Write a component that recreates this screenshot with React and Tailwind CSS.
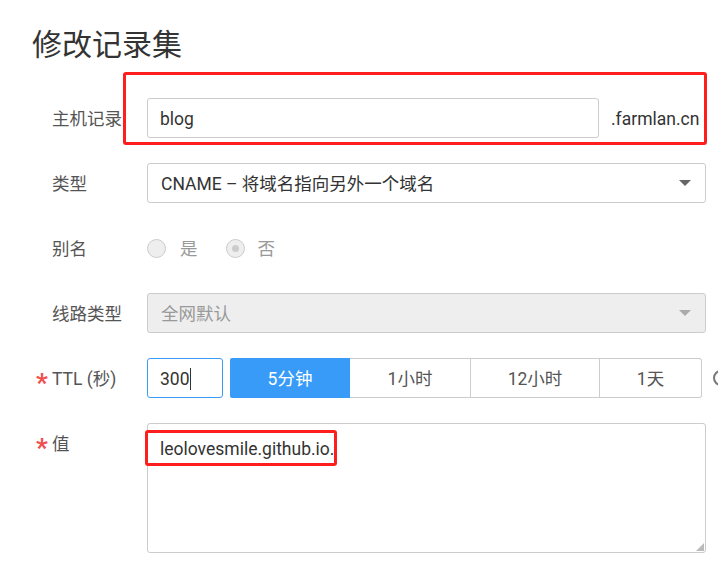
import React from "react";

function Caret({ color }) {
  return (
    <svg width="12" height="7" viewBox="0 0 12 7" className="shrink-0">
      <path d="M0 0 L12 0 L6 6 Z" fill={color} />
    </svg>
  );
}

function Label({ children, required }) {
  return (
    <div className="w-[110px] h-10 shrink-0 flex items-center text-[17.5px] text-[#555] pt-[2px]">
      <span className="w-[15px] text-[#f0504f] text-[26px] font-bold leading-none pt-[8px] -ml-[1px] mr-[1px]">{required ? "*" : ""}</span>
      <span>{children}</span>
    </div>
  );
}

export default function App() {
  return (
    <div className="relative w-[718px] h-[565px] overflow-hidden bg-white font-['Roboto','Noto_Sans_CJK_SC',sans-serif]">
      <h1 className="pl-[32px] pt-[25px] text-[30px] leading-[40px] text-[#333] font-normal">修改记录集</h1>

      <div className="mt-[33px] pl-[37px] pr-[12px] flex flex-col gap-[25px]">
        {/* 主机记录 */}
        <div className="flex items-center h-10">
          <Label>主机记录</Label>
          <div className="w-[452px] shrink-0 h-10 border border-[#ccc] rounded-[3px] flex items-center px-[12px] pt-[2px] text-[17.5px] text-[#333]">
            blog
          </div>
          <span className="ml-[12px] pt-[2px] text-[17.5px] text-[#333] whitespace-nowrap">.farmlan.cn</span>
        </div>

        {/* 类型 */}
        <div className="flex items-center h-10">
          <Label>类型</Label>
          <div className="flex-1 h-10 border border-[#ccc] rounded-[3px] flex items-center justify-between pl-[13px] pr-[14px] text-[17.5px] text-[#333]">
            <span className="pt-[2px]">CNAME – 将域名指向另外一个域名</span>
            <Caret color="#666" />
          </div>
        </div>

        {/* 别名 */}
        <div className="flex items-center h-10">
          <Label>别名</Label>
          <div className="flex items-center text-[17.5px] text-[#999]">
            <span className="w-[19px] h-[19px] rounded-full border border-[#ccc] bg-[#eee]" />
            <span className="ml-[14px] pt-[2px]">是</span>
            <span className="ml-[28px] w-[19px] h-[19px] rounded-full border border-[#ccc] bg-[#eee] flex items-center justify-center">
              <span className="w-[7px] h-[7px] rounded-full bg-[#ccc]" />
            </span>
            <span className="ml-[13px] pt-[2px]">否</span>
          </div>
        </div>

        {/* 线路类型 */}
        <div className="flex items-center h-10">
          <Label>线路类型</Label>
          <div className="flex-1 h-10 border border-[#ccc] rounded-[3px] bg-[#eee] flex items-center justify-between pl-[13px] pr-[14px] text-[17.5px] text-[#999]">
            <span className="pt-[2px]">全网默认</span>
            <Caret color="#aaa" />
          </div>
        </div>

        {/* TTL */}
        <div className="flex items-center h-10">
          <Label required>TTL (秒)</Label>
          <div className="w-[76px] shrink-0 h-10 border border-[#3a9cf7] rounded-[3px] flex items-center pl-[12px] pt-[2px] text-[17.5px] text-[#333]">
            <span>300</span>
            <span className="w-px h-[22px] bg-[#333]" />
          </div>
          <div className="ml-[7px] shrink-0 flex h-10 text-[17.5px]">
            <div className="w-[120px] h-10 bg-[#389bf8] rounded-l-[2px] flex items-center justify-center pt-[2px] text-white">5分钟</div>
            <div className="w-[121px] h-10 border border-l-0 border-[#ccc] flex items-center justify-center pt-[2px] text-[#555]">1小时</div>
            <div className="w-[129px] h-10 border border-l-0 border-[#ccc] flex items-center justify-center pt-[2px] text-[#555]">12小时</div>
            <div className="w-[102px] h-10 border border-l-0 border-[#ccc] rounded-r-[3px] flex items-center justify-center pt-[2px] text-[#555]">1天</div>
          </div>
          <span className="ml-[11px] shrink-0 w-[16px] h-[16px] rounded-full border-2 border-[#777]" />
        </div>

        {/* 值 */}
        <div className="flex items-start">
          <Label required>值</Label>
          <div className="relative flex-1 h-[130px] border border-[#ccc] rounded-[3px] pl-[12px] pt-[13px] text-[17.5px] leading-[24px] text-[#333]">
            leolovesmile.github.io.
            <svg width="8" height="8" viewBox="0 0 8 8" className="absolute right-[1px] bottom-[1px]">
              <path d="M8 0 L8 8 L0 8 Z" fill="#bbb" />
            </svg>
          </div>
        </div>
      </div>

      {/* annotation boxes */}
      <div className="absolute left-[123px] top-[72px] w-[584px] h-[73px] border-[3px] border-[#ff1e1e] rounded-[3px]" />
      <div className="absolute left-[145px] top-[430px] w-[192px] h-[36px] border-[3px] border-[#ff1e1e] rounded-[3px]" />
    </div>
  );
}
